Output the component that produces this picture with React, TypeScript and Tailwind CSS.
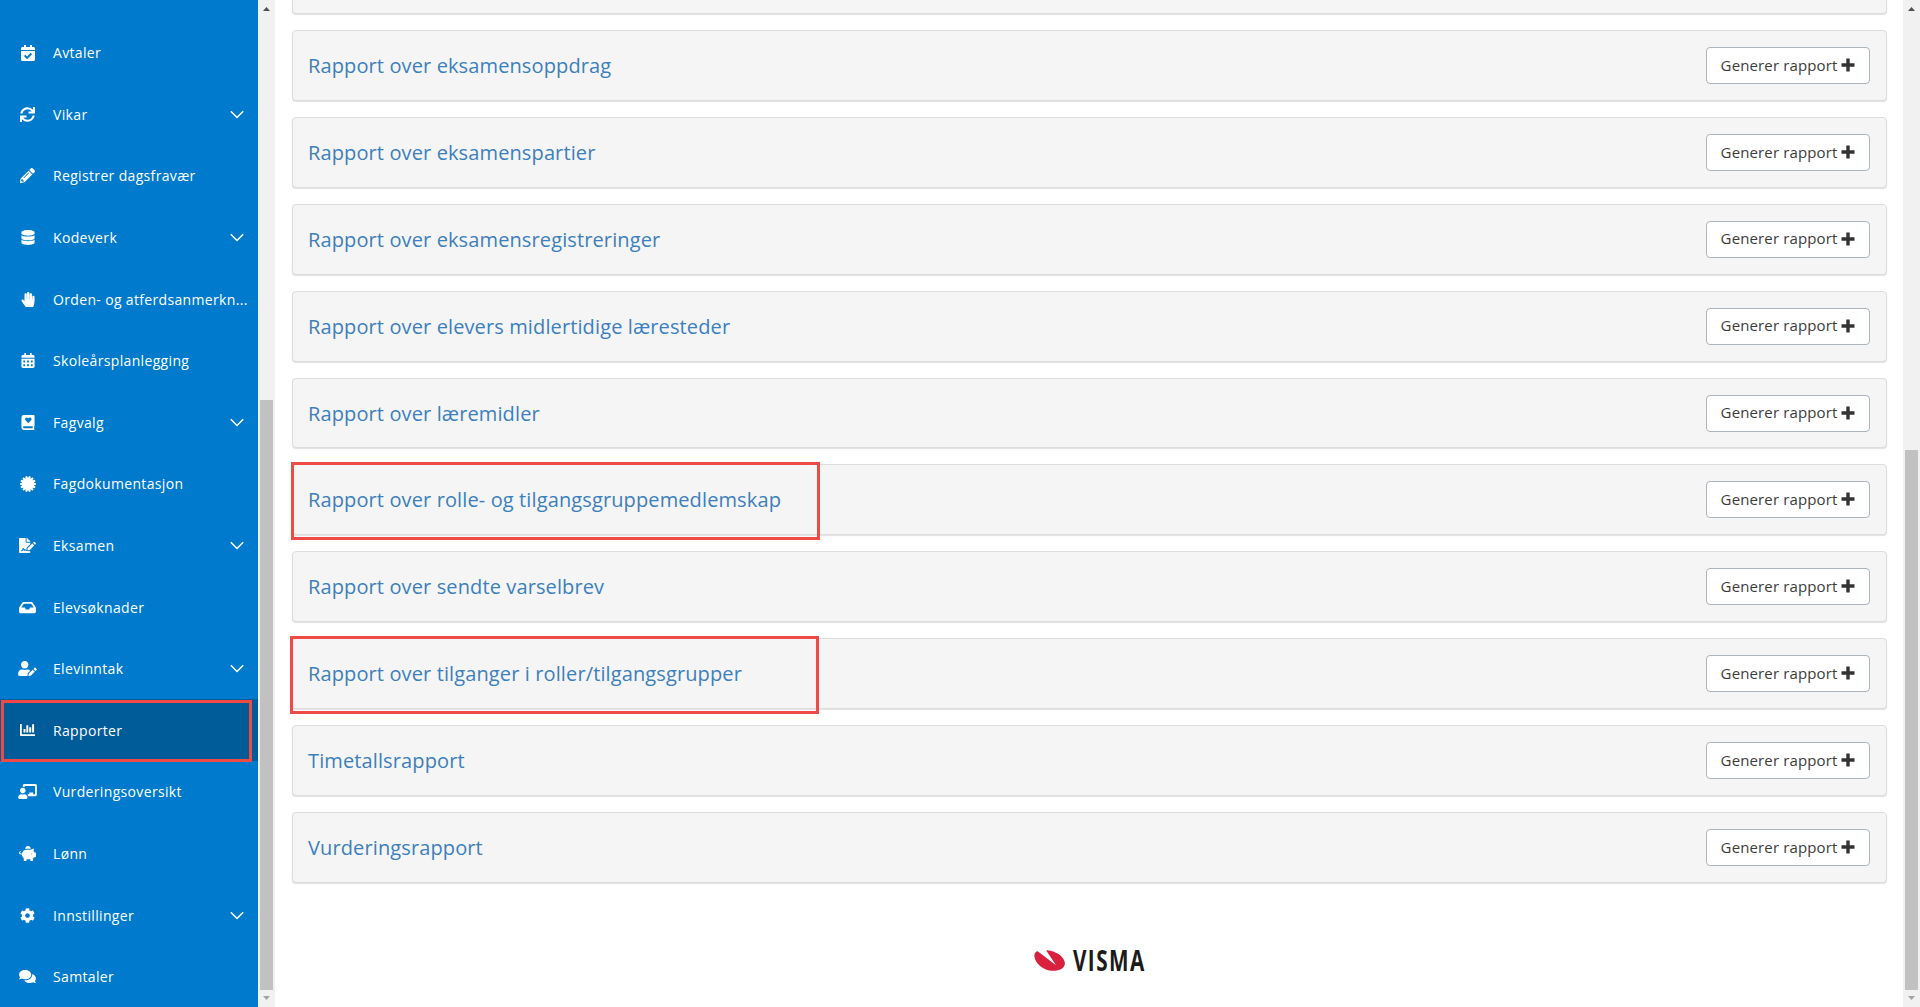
import type { ComponentType, ReactNode } from "react";
import {
  FaCalendarAlt,
  FaCalendarCheck,
  FaChalkboardTeacher,
  FaCog,
  FaComments,
  FaDatabase,
  FaFileSignature,
  FaHandPaper,
  FaInbox,
  FaPencilAlt,
  FaPiggyBank,
  FaSync,
  FaUserEdit,
} from "react-icons/fa";

type IconType = ComponentType<{ className?: string }>;

const BookHeart: IconType = ({ className }) => (
  <svg viewBox="0 0 14 16" className={className} fill="currentColor" fillRule="evenodd">
    <path d="M2.6 0H13a1 1 0 0 1 1 1v10.4a1 1 0 0 1-.5.8v2.2a.8.8 0 0 1 .5.6c0 .6-.4 1-1 1H2.6A2.6 2.6 0 0 1 0 13.400V2.600A2.600 2.600 0 0 1 2.600 0ZM2.800 12a1 1 0 0 0 0 2H12v-2ZM7.300 8.800l3-3.100a1.800 1.800 0 0 0-.1-2.600c-.8-.7-1.900-.6-2.600.1l-.3.400-.4-.4a1.900 1.900 0 0 0-2.500-.1 1.800 1.800 0 0 0-.1 2.600Z" />
  </svg>
);

const TEETH = Array.from({ length: 14 }, (_, i) => (i * 360) / 14 + 12.857);

const Badge: IconType = ({ className }) => (
  <svg viewBox="0 0 16 16" className={className} fill="currentColor">
    <circle cx="8" cy="8" r="5.800" />
    {TEETH.map((angle) => (
      <path key={angle} d="M6.500 3 7.200 0h1.600l.7 3Z" transform={`rotate(${angle} 8 8)`} />
    ))}
  </svg>
);

const ChartBar: IconType = ({ className }) => (
  <svg viewBox="0 0 15 12" className={className} fill="currentColor">
    <path d="M0 0h1.800v10.200H15V12H.8a.8.8 0 0 1-.8-.8ZM3.500 5h2v3.500h-2ZM6.300 1.200h2v7.300h-2ZM9.200 3.200h2v5.300h-2ZM12.100.2h2v8.300h-2Z" />
  </svg>
);

const Chevron = () => (
  <svg viewBox="0 0 14 9" className="mt-px h-[9px] w-[14px] shrink-0" fill="none" stroke="currentColor" strokeWidth="1.500">
    <path d="M.8 1.200 7 7.500l6.200-6.300" />
  </svg>
);

type Item = { label: string; Icon: IconType; size: string; expandable?: boolean; active?: boolean };

const ITEMS: Item[] = [
  { label: "Avtaler", Icon: FaCalendarCheck, size: "h-4 w-[14px]" },
  { label: "Vikar", Icon: FaSync, size: "h-[15px] w-[15px]", expandable: true },
  { label: "Registrer dagsfravær", Icon: FaPencilAlt, size: "h-[15px] w-[15px]" },
  { label: "Kodeverk", Icon: FaDatabase, size: "h-[15px] w-[14px]", expandable: true },
  { label: "Orden- og atferdsanmerkn...", Icon: FaHandPaper, size: "h-[15px] w-[14px]" },
  { label: "Skoleårsplanlegging", Icon: FaCalendarAlt, size: "h-[15px] w-[14px]" },
  { label: "Fagvalg", Icon: BookHeart, size: "h-[15px] w-[14px]", expandable: true },
  { label: "Fagdokumentasjon", Icon: Badge, size: "h-4 w-4" },
  { label: "Eksamen", Icon: FaFileSignature, size: "h-[15px] w-[17px]", expandable: true },
  { label: "Elevsøknader", Icon: FaInbox, size: "h-[15px] w-[17px]" },
  { label: "Elevinntak", Icon: FaUserEdit, size: "h-[15px] w-[19px]", expandable: true },
  { label: "Rapporter", Icon: ChartBar, size: "h-[12px] w-[15px]", active: true },
  { label: "Vurderingsoversikt", Icon: FaChalkboardTeacher, size: "h-[15px] w-[19px]" },
  { label: "Lønn", Icon: FaPiggyBank, size: "h-[15px] w-[17px]" },
  { label: "Innstillinger", Icon: FaCog, size: "h-[15px] w-[15px]", expandable: true },
  { label: "Samtaler", Icon: FaComments, size: "h-[15px] w-[17px]" },
];

type Report = { title: string; mark?: string };

const REPORTS: Report[] = [
  { title: "Rapport over eksamensoppdrag" },
  { title: "Rapport over eksamenspartier" },
  { title: "Rapport over eksamensregistreringer" },
  { title: "Rapport over elevers midlertidige læresteder" },
  { title: "Rapport over læremidler" },
  { title: "Rapport over rolle- og tilgangsgruppemedlemskap", mark: "-left-[2px] -top-[3px]" },
  { title: "Rapport over sendte varselbrev" },
  { title: "Rapport over tilganger i roller/tilgangsgrupper", mark: "-left-[3px] -top-[3px]" },
  { title: "Timetallsrapport" },
  { title: "Vurderingsrapport" },
];

function MenuItem({ label, Icon, size, expandable, active }: Item) {
  return (
    <li
      className={`relative flex h-[61.6px] shrink-0 items-center pr-[14px] text-white ${active ? "bg-[#005b99]" : ""}`}
    >
      <span className="ml-4 flex w-[23px] shrink-0 justify-center pt-px">
        <Icon className={`${size} shrink-0`} />
      </span>
      <span className="ml-[14px] flex-1 whitespace-nowrap pt-px text-[14px] font-medium tracking-[0.34px]">{label}</span>
      {expandable && <Chevron />}
      {active && <span className="absolute left-px top-px h-[62px] w-[251px] border-3 border-[#ee4b46]" />}
    </li>
  );
}

function Scrollbar({ thumb }: { thumb: ReactNode }) {
  return (
    <div className="flex h-full w-[17px] shrink-0 flex-col items-center bg-[#f1f1f1]">
      <svg viewBox="0 0 17 17" className="h-[17px] w-[17px] shrink-0">
        <path d="M5 11 8.500 7 12 11Z" fill="#505050" />
      </svg>
      <div className="flex flex-1 flex-col justify-end">{thumb}</div>
      <svg viewBox="0 0 17 17" className="h-[17px] w-[17px] shrink-0">
        <path d="M5 6 8.500 10 12 6Z" fill="#a3a3a3" />
      </svg>
    </div>
  );
}

function ReportCard({ title, mark }: Report) {
  return (
    <section className="relative flex h-[70.9px] shrink-0 items-center justify-between rounded-[4px] border border-[#dddddd] bg-[#f5f5f5] pl-[15px] pr-4 shadow-[0_1px_1px_rgba(0,0,0,0.12)]">
      <h2 className="pt-px text-[20px] tracking-[0.12px] text-[#3c80bd]">{title}</h2>
      <button className="flex h-[37px] w-[164px] items-center justify-center gap-1 rounded-[4px] border border-[#adb5bd] bg-white pb-px text-[15px] tracking-[0.13px] text-[#3c3c3c]">
        Generer rapport
        <svg viewBox="0 0 14 14" className="h-[14px] w-[14px]" fill="#333333">
          <path d="M5.300.5h3.400v4.800h4.800v3.400H8.700v4.800H5.300V8.700H.5V5.300h4.800Z" />
        </svg>
      </button>
      {mark && <span className={`absolute h-[78px] w-[529px] border-3 border-[#ee4b46] ${mark}`} />}
    </section>
  );
}

function VismaLogo() {
  return (
    <div className="flex items-center gap-[8px]">
      <svg viewBox="0 0 31 21" className="h-[21px] w-[31px]" fill="#d9213f">
        <path d="M2.200 1.800C.2 3.500-.2 6.200 1.300 9.700 3.500 15.200 10.500 20.300 18 20.800c7 .4 12.500-2.200 12.900-7C31.300 7.600 23 1 13 .2c-.5 0-.9.1-.6.600L22 15.200 4 1.600C3.200 1.100 2.800 1.200 2.200 1.800Z" />
      </svg>
      <svg viewBox="0 -10 72 41" className="-my-[10px] h-[41px] w-[72px] overflow-visible">
        <text
          transform="scale(0.74 1)"
          x="0"
          y="20.700"
          className="fill-[#1b1b19] font-['Open_Sans',sans-serif] text-[28px] font-bold tracking-[1.900px]"
        >
          VISMA
        </text>
      </svg>
    </div>
  );
}

export default function App() {
  return (
    <div className="flex h-[1007px] w-[1920px] overflow-hidden bg-white font-['Open_Sans',sans-serif]">
      <nav className="h-full w-[258px] shrink-0 overflow-hidden bg-[#007acc]">
        <ul className="flex flex-col pt-[21.4px]">
          {ITEMS.map((item) => (
            <MenuItem key={item.label} {...item} />
          ))}
        </ul>
      </nav>
      <Scrollbar thumb={<div className="h-[590px] w-[13px] bg-[#c1c1c1]" />} />
      <main className="flex flex-1 flex-col overflow-hidden pl-[17px] pr-4">
        <div className="flex flex-col gap-4">
          <div className="h-[14px] shrink-0 rounded-b-[4px] border border-t-0 border-[#dddddd] bg-[#f5f5f5] shadow-[0_1px_1px_rgba(0,0,0,0.12)]" />
          {REPORTS.map((report) => (
            <ReportCard key={report.title} {...report} />
          ))}
        </div>
        <footer className="mt-[67px] flex justify-center">
          <VismaLogo />
        </footer>
      </main>
      <Scrollbar thumb={<div className="h-[540px] w-[13px] bg-[#c1c1c1]" />} />
    </div>
  );
}
